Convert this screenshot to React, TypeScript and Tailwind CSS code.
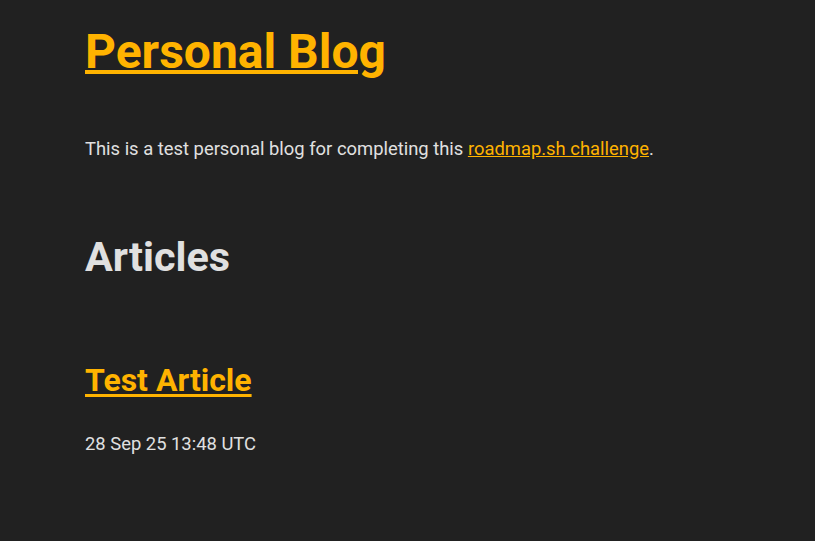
export default function App() {
    return (
        <div className="min-h-screen w-full bg-[#212121] text-[#e0e0e0] font-['Roboto',sans-serif]">
            <div className="px-[85px] pt-[24px] pb-10">
                {/* Header */}
                <h1 className="text-[48px] leading-[56px] font-bold">
                    <a href="#" className="text-[#ffb300] underline decoration-[4px] underline-offset-[2px]">
                        Personal Blog
                    </a>
                </h1>

                <p className="mt-[55px] text-[18.4px] leading-[27px]">
                    This is a test personal blog for completing this{" "}
                    <a href="#" className="text-[#ffb300] underline">roadmap.sh challenge</a>.
                </p>

                {/* Articles */}
                <h2 className="mt-[71px] text-[41.4px] leading-[48px] font-bold">Articles</h2>

                <article className="mt-[79px]">
                    <h3 className="text-[32px] leading-[40px] font-bold">
                        <a href="#" className="text-[#ffb300] underline decoration-[3px] underline-offset-[3px]">
                            Test Article
                        </a>
                    </h3>
                    <p className="mt-[30px] text-[18.4px] leading-[27px]">28 Sep 25 13:48 UTC</p>
                </article>
            </div>
        </div>
    );
}
